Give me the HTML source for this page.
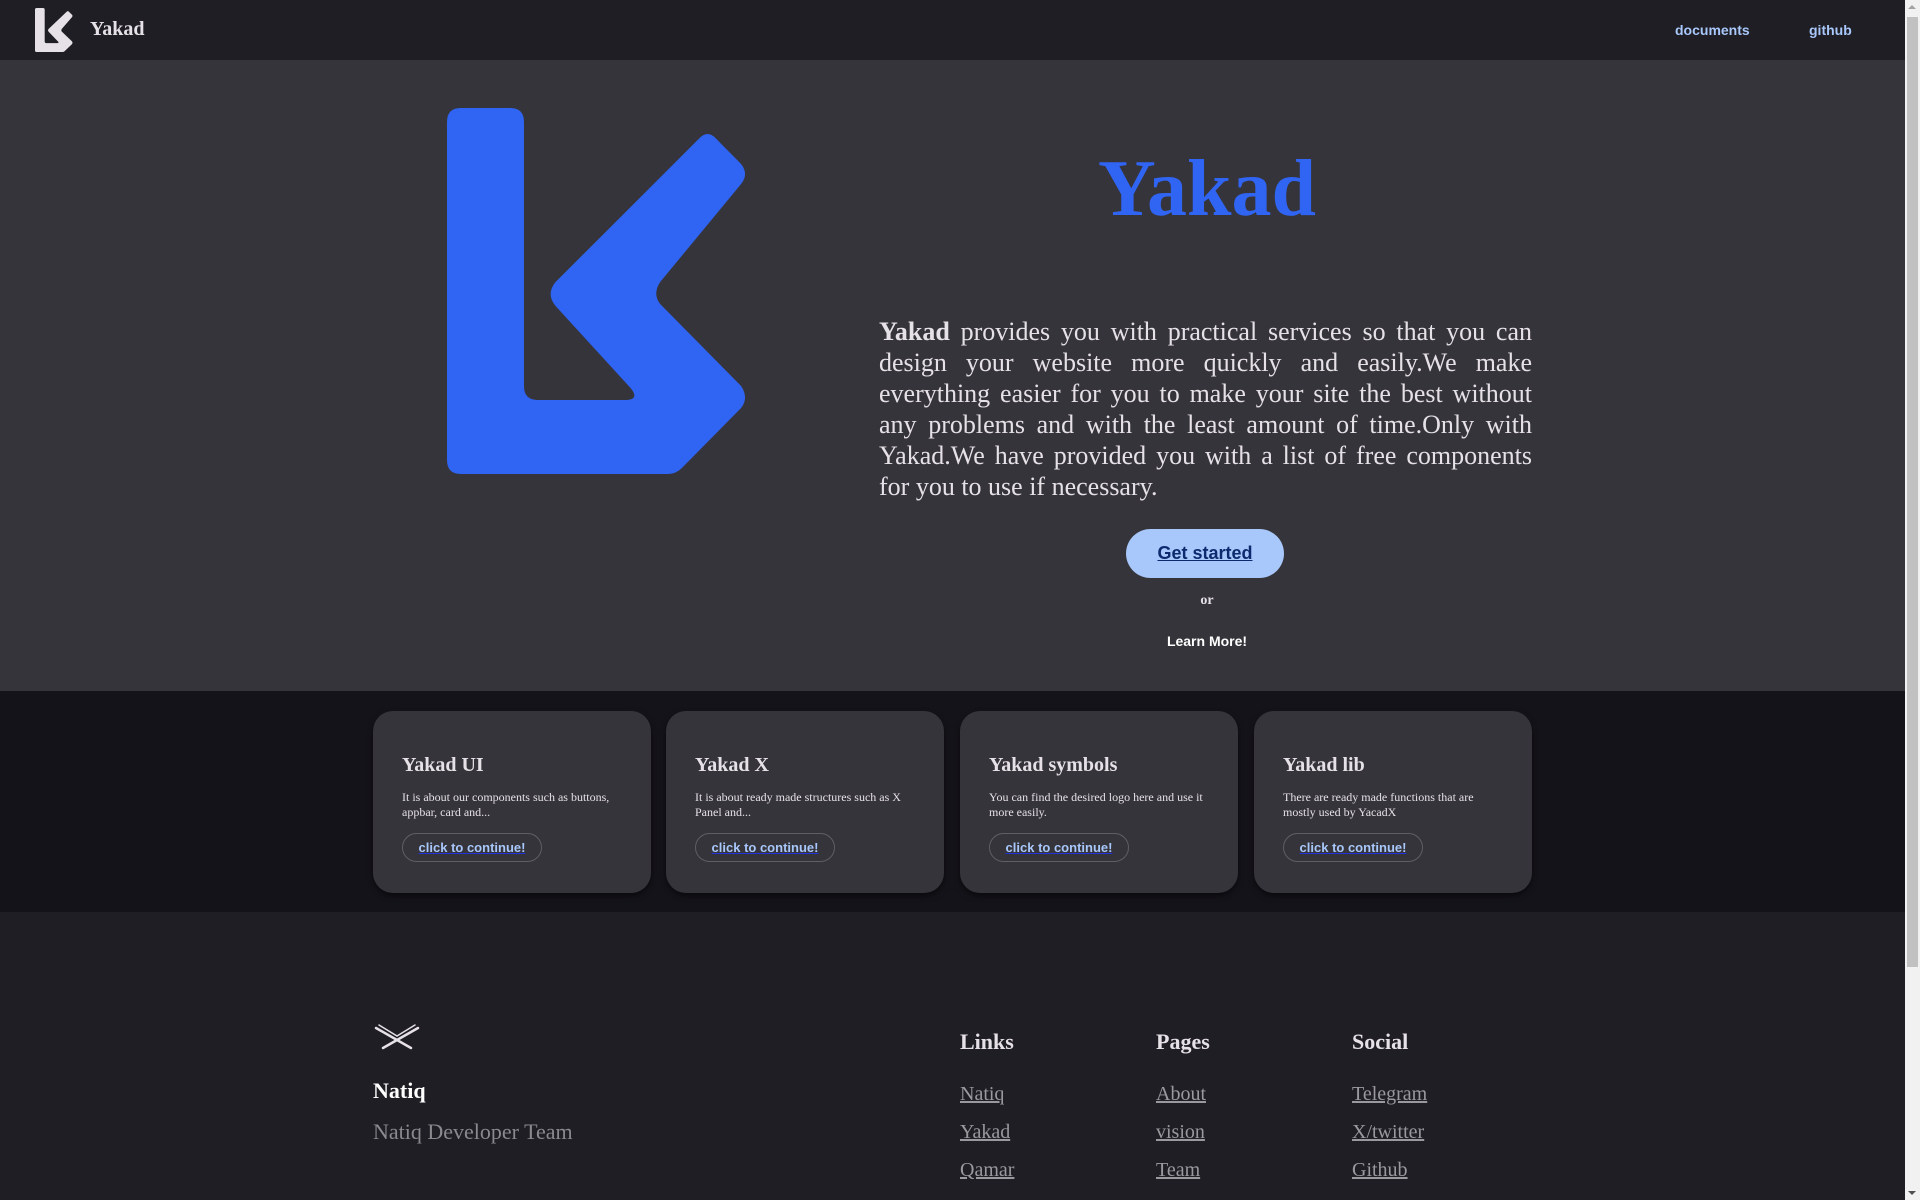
<!DOCTYPE html>
<html><head><meta charset="utf-8"><style>
*{box-sizing:border-box;margin:0;padding:0}
html,body{width:1920px;height:1200px;overflow:hidden;background:#1f1e24}
body{font-family:"Liberation Serif",serif;position:relative}
.sb{position:absolute;right:0;top:0;width:15px;height:1200px;background:#f1f1f1}
.sb .th{position:absolute;left:2px;right:2px;top:17px;height:950px;background:#c1c1c1}
.sb .up,.sb .dn{position:absolute;left:3px;width:0;height:0;border-left:4px solid transparent;border-right:4px solid transparent}
.sb .up{top:5px;border-bottom:4px solid #a3a3a3}
.sb .dn{bottom:5px;border-top:4px solid #505050}
.nav{position:absolute;left:0;top:0;width:1905px;height:60px;background:#1f1e24}
.nav .brand{position:absolute;left:90px;top:18px;color:#e6e1e6;font-weight:bold;font-size:20px}
.nav a{position:absolute;top:22px;color:#a8c7fa;font:bold 14px "Liberation Sans",sans-serif;text-decoration:none}
.hero{position:absolute;left:0;top:60px;width:1905px;height:631px;background:#35343a}
.title{position:absolute;left:1000px;width:414px;top:84px;text-align:center;color:#3064f2;font-weight:bold;font-size:80px}
.para{position:absolute;left:879px;top:257px;width:653px;color:#e6e1e6;font-size:26px;line-height:30.9px;text-align:justify}
.btn{position:absolute;left:1126px;top:469px;width:158px;height:49px;border-radius:25px;background:#a8c7fa;color:#0d2a6e;font:bold 18px "Liberation Sans",sans-serif;line-height:49px;text-decoration:underline;text-align:center}
.or{position:absolute;left:1000px;width:414px;top:533px;text-align:center;color:#e6e1e6;font-weight:bold;font-size:14px}
.lm{position:absolute;left:1000px;width:414px;top:573px;text-align:center;color:#fff;font:bold 14px "Liberation Sans",sans-serif}
.cards{position:absolute;left:0;top:691px;width:1905px;height:221px;background:#141319}
.card{position:absolute;top:20px;width:278px;height:182px;border-radius:20px;background:#35343a;box-shadow:0 3px 6px rgba(0,0,0,.5);padding:0 29px}
.card h3{margin-top:43px;color:#e6e1e6;font-size:20px;font-weight:bold}
.card p{margin-top:13px;color:#e6e1e6;font-size:12px;line-height:15px;height:30px}
.card .cb{display:block;margin-top:13px;width:140px;height:29px;border:1px solid #5f5e64;border-radius:15px;text-align:center;font:bold 13px "Liberation Sans",sans-serif;line-height:27px;color:#a8c7fa;text-decoration:underline;text-decoration-color:#2233dd}
.foot{position:absolute;left:0;top:912px;width:1905px;height:288px;background:#1f1e24}
.f1{position:absolute;left:373px;top:166px;color:#fff;font-weight:bold;font-size:22px}
.f2{position:absolute;left:373px;top:207px;color:#8a898e;font-size:22px}
.col{position:absolute;top:117px}
.col h4{color:#e6e1e6;font-size:22px;font-weight:bold;height:54px}
.col a{display:block;color:#9a999e;font-size:20px;text-decoration:underline;height:38px}
</style></head><body>
<div class="nav">
<svg style="position:absolute;left:35px;top:8px" width="38" height="44" viewBox="0 0 306 366" preserveAspectRatio="none"><path fill="#e6e1e6" d="M0 14 Q0 0 14 0 H64 Q78 0 78 14 V278 Q78 292 92 292 H180 Q196 292 186 280 L110 198 Q100 186 110 174 L256 30 Q264 22 272 30 L298 56 Q306 66 298 76 L216 174 Q208 186 216 196 L298 278 Q306 290 298 300 L238 360 Q232 366 224 366 H14 Q0 366 0 352 Z"/></svg>
<div class="brand">Yakad</div>
<a style="left:1675px">documents</a><a style="left:1809px">github</a>
</div>
<div class="hero">
<svg style="position:absolute;left:447px;top:48px" width="302" height="366" viewBox="0 0 306 366" preserveAspectRatio="none"><path fill="#3064f2" d="M0 14 Q0 0 14 0 H64 Q78 0 78 14 V278 Q78 292 92 292 H180 Q196 292 186 280 L110 198 Q100 186 110 174 L256 30 Q264 22 272 30 L298 56 Q306 66 298 76 L216 174 Q208 186 216 196 L298 278 Q306 290 298 300 L238 360 Q232 366 224 366 H14 Q0 366 0 352 Z"/></svg>
<div class="title">Yakad</div>
<div class="para"><b>Yakad</b> provides you with practical services so that you can design your website more quickly and easily.We make everything easier for you to make your site the best without any problems and with the least amount of time.Only with Yakad.We have provided you with a list of free components for you to use if necessary.</div>
<div class="btn">Get started</div>
<div class="or">or</div>
<div class="lm">Learn More!</div>
</div>
<div class="cards">
<div class="card" style="left:373px"><h3>Yakad UI</h3><p>It is about our components such as buttons, appbar, card and...</p><a class="cb">click to continue!</a></div>
<div class="card" style="left:666px"><h3>Yakad X</h3><p>It is about ready made structures such as X Panel and...</p><a class="cb">click to continue!</a></div>
<div class="card" style="left:960px"><h3>Yakad symbols</h3><p>You can find the desired logo here and use it more easily.</p><a class="cb">click to continue!</a></div>
<div class="card" style="left:1254px"><h3>Yakad lib</h3><p>There are ready made functions that are mostly used by YacadX</p><a class="cb">click to continue!</a></div>
</div>
<div class="foot">
<svg style="position:absolute;left:373px;top:110px" width="48" height="30" viewBox="0 0 48 30"><g stroke="#e6e1e6" stroke-width="2.5" stroke-linecap="round"><line x1="3" y1="6" x2="38" y2="26"/><line x1="45" y1="6" x2="10" y2="26"/><line x1="6" y1="3" x2="24" y2="14" stroke-width="1.5"/><line x1="42" y1="3" x2="24" y2="14" stroke-width="1.5"/></g></svg>
<div class="f1">Natiq</div>
<div class="f2">Natiq Developer Team</div>
<div class="col" style="left:960px"><h4>Links</h4><a>Natiq</a><a>Yakad</a><a>Qamar</a></div>
<div class="col" style="left:1156px"><h4>Pages</h4><a>About</a><a>vision</a><a>Team</a></div>
<div class="col" style="left:1352px"><h4>Social</h4><a>Telegram</a><a>X/twitter</a><a>Github</a></div>
</div>
<div class="sb"><div class="up"></div><div class="th"></div><div class="dn"></div></div>
</body></html>
